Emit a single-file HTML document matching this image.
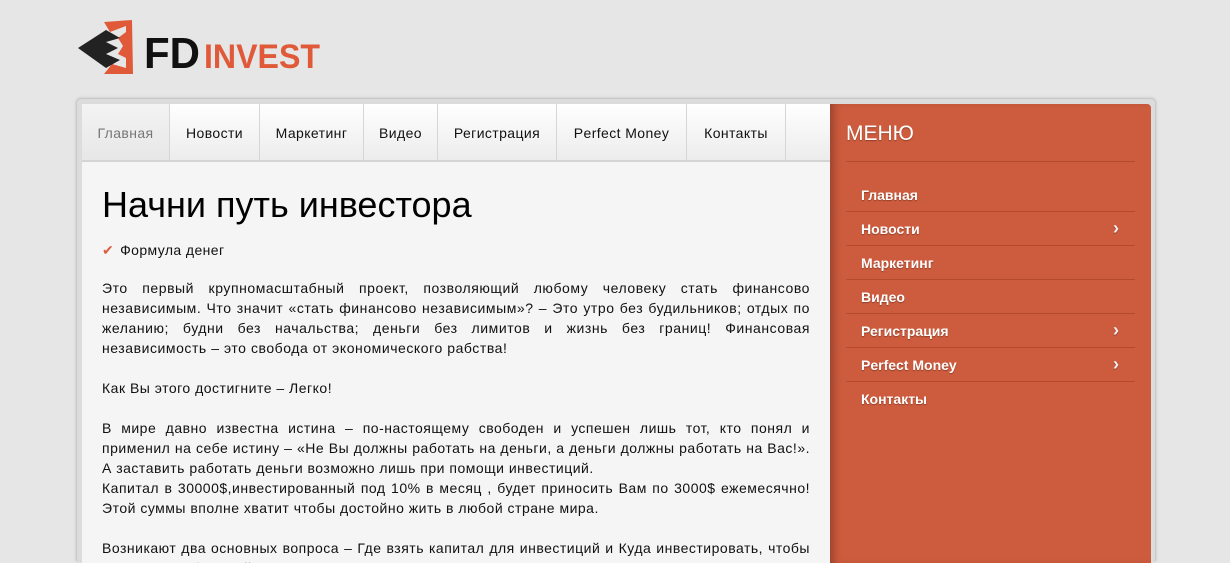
<!DOCTYPE html>
<html style="overflow:hidden;height:563px"><head><meta charset="utf-8"><style>
body{margin:0;width:1230px;height:563px;overflow:hidden;background:#e6e6e6;font-family:"Liberation Sans",sans-serif;position:relative}
.frame{position:absolute;left:76px;top:98px;width:1078px;height:462px;border:1px solid #c8c8c8;border-bottom:none;border-radius:5px 5px 0 0;background:#dcdcdc;box-shadow:0 0 3px rgba(0,0,0,.15)}
.main{position:absolute;left:82px;top:104px;width:748px;height:459px;background:#f5f5f5;overflow:hidden}
.nav{position:absolute;left:0;top:0;width:748px;height:56px;background:linear-gradient(#fff,#ececec);border-bottom:2px solid #d4d4d4;display:flex}
.nav div{height:56px;line-height:58px;font-size:14px;letter-spacing:0.4px;color:#111;border-right:1px solid #d6d6d6;text-align:center;box-sizing:border-box;white-space:nowrap}
.nav div.a{color:#777;background:linear-gradient(#f3f3f3,#e7e7e7)}
h1{position:absolute;left:20px;top:80px;margin:0;font-weight:normal;font-size:36px;color:#000}
.sub{position:absolute;left:20px;top:138px;font-size:14px;letter-spacing:0.4px;color:#111}
.sub span{color:#d9603f;margin-right:6px}
.txt{position:absolute;left:20px;top:174px;width:708px;height:285px;overflow:hidden;font-size:14px;letter-spacing:0.5px;line-height:20px;color:#111;text-align:justify}
.txt p{margin:0 0 20px}
.side{position:absolute;left:830px;top:104px;width:321px;height:459px;background:#cd5b3d;border-top-right-radius:4px;box-shadow:inset 8px 0 8px -4px rgba(0,0,0,.25)}
.side .t{position:absolute;left:16px;top:18px;color:#fff;font-size:21px;text-shadow:0 1px 1px rgba(0,0,0,.3)}
.side .hr{position:absolute;left:16px;top:57px;width:289px;border-top:1px solid #b5492e}
.side ul{position:absolute;left:16px;top:74px;width:289px;margin:0;padding:0;list-style:none}
.side li{height:33px;line-height:34px;border-bottom:1px solid #b5492e;color:#fff;font-size:14px;font-weight:bold;padding-left:15px;position:relative;text-shadow:0 1px 1px rgba(0,0,0,.3)}
.side li:last-child{border:none}
.side li b{position:absolute;right:16px;top:-1px;font-weight:bold;font-size:18px;color:#eee}
</style></head><body>
<svg style="position:absolute;left:76px;top:18px" width="250" height="62" viewBox="0 0 250 62">
<polygon points="28,4 56,2 57,56 28,56 36,46 50,50 50,40 42,36 47,28 42,20 50,14 50,8 34,14" fill="#e05a3a"/>
<polygon points="2,30 30,12 44,20 30,24 42,30 30,36 44,42 30,50" fill="#222"/>
<text x="68" y="50" font-family="Liberation Sans" font-weight="bold" font-size="44" fill="#111" textLength="56" lengthAdjust="spacingAndGlyphs">FD</text>
<text x="128" y="50" font-family="Liberation Sans" font-weight="bold" font-size="34" fill="#e05a3a" textLength="116" lengthAdjust="spacingAndGlyphs">INVEST</text>
</svg>
<div class="frame"></div>
<div class="main">
<div class="nav"><div class="a" style="width:88px">Главная</div><div style="width:90px">Новости</div><div style="width:104px">Маркетинг</div><div style="width:74px">Видео</div><div style="width:119px">Регистрация</div><div style="width:130px">Perfect Money</div><div style="width:99px">Контакты</div></div>
<h1>Начни путь инвестора</h1>
<div class="sub"><span>✔</span>Формула денег</div>
<div class="txt">
<p style="letter-spacing:0.55px">Это первый крупномасштабный проект, позволяющий любому человеку стать финансово независимым. Что значит «стать финансово независимым»? – Это утро без будильников; отдых по желанию; будни без начальства; деньги без лимитов и жизнь без границ! Финансовая независимость – это свобода от экономического рабства!</p>
<p>Как Вы этого достигните – Легко!</p>
<p>В мире давно известна истина – по-настоящему свободен и успешен лишь тот, кто понял и применил на себе истину – «Не Вы должны работать на деньги, а деньги должны работать на Вас!». А заставить работать деньги возможно лишь при помощи инвестиций.<br>Капитал в 30000$,инвестированный под 10% в месяц , будет приносить Вам по 3000$ ежемесячно! Этой суммы вполне хватит чтобы достойно жить в любой стране мира.</p>
<p>Возникают два основных вопроса – Где взять капитал для инвестиций и Куда инвестировать, чтобы получать стабильный доход?</p>
</div>
</div>
<div class="side"><div class="t">МЕНЮ</div><div class="hr"></div>
<ul><li>Главная</li><li>Новости<b>›</b></li><li>Маркетинг</li><li>Видео</li><li>Регистрация<b>›</b></li><li>Perfect Money<b>›</b></li><li>Контакты</li></ul></div>
</body></html>
